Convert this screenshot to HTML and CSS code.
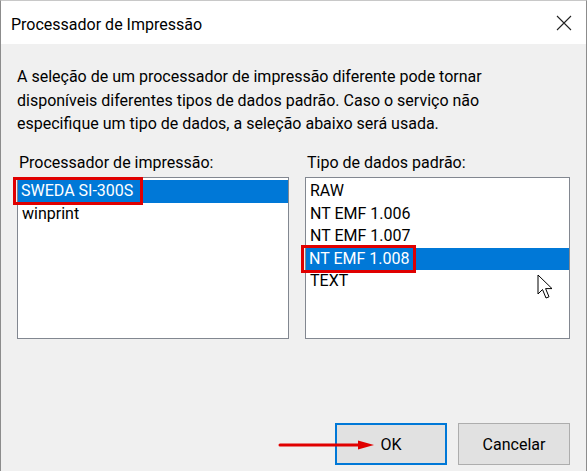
FILE: index.html
```html
<!DOCTYPE html>
<html lang="pt">
<head>
<meta charset="utf-8">
<link rel="stylesheet" href="styles.css">
</head>
<body>
<div class="window">
  <div class="titlebar">
    <span class="title">Processador de Impressão</span>
    <svg class="close" width="16" height="16" viewBox="0 0 16 16"><path d="M1 1L15 15M15 1L1 15" stroke="#222" stroke-width="1.1" fill="none"/></svg>
  </div>
  <div class="content">
    <p class="desc">A seleção de um processador de impressão diferente pode tornar<br>disponíveis diferentes tipos de dados padrão. Caso o serviço não<br>especifique um tipo de dados, a seleção abaixo será usada.</p>
    <div class="columns">
      <div class="col col-left">
        <div class="label">Processador de impressão:</div>
        <div class="list">
          <div class="item selected"><span class="mark mark-left">SWEDA SI-300S</span></div>
          <div class="item">winprint</div>
        </div>
      </div>
      <div class="col col-right">
        <div class="label">Tipo de dados padrão:</div>
        <div class="list">
          <div class="item">RAW</div>
          <div class="item">NT EMF 1.006</div>
          <div class="item">NT EMF 1.007</div>
          <div class="item selected"><span class="mark mark-right">NT EMF 1.008</span></div>
          <div class="item">TEXT</div>
          <svg class="cursor" width="18" height="27" viewBox="0 0 18 27"><path d="M1 1 L1 20 L5.5 15.5 L9 24 L12 22.8 L8.6 14.6 L15 14.6 Z" fill="#fff" stroke="#000" stroke-width="1" stroke-linejoin="miter"/></svg>
        </div>
      </div>
    </div>
    <div class="buttons">
      <svg class="arrow" width="100" height="12" viewBox="0 0 100 12"><path d="M2 6 H84" stroke="#e00000" stroke-width="3" stroke-linecap="round"/><path d="M80 1.5 L96 6 L80 10.5 Z" fill="#e00000"/></svg>
      <button class="btn btn-default">OK</button>
      <button class="btn">Cancelar</button>
    </div>
  </div>
</div>
</body>
</html>
```

FILE: styles.css
```css
html, body {
  margin: 0;
  padding: 0;
  background: #f0f0f0;
}
body {
  font-family: Roboto, "Noto Sans", sans-serif;
  font-size: 16px;
  color: #000;
}
.window {
  width: 587px;
  height: 471px;
  box-sizing: border-box;
  border-left: 1px solid #8c8c8c;
  border-right: 1px solid #8c8c8c;
  border-top: 1px solid #c8c8c8;
  background: #f0f0f0;
  display: flex;
  flex-direction: column;
}
.titlebar {
  height: 43px;
  background: #fff;
  display: flex;
  align-items: center;
  justify-content: space-between;
  padding: 0 14px 0 10px;
  box-sizing: border-box;
}
.title {
  font-size: 16px;
  position: relative;
  top: 2px;
}
.close {
  position: relative;
  top: 0px;
}
.content {
  flex: 1;
  padding: 21px 16px 0 16px;
  display: flex;
  flex-direction: column;
}
.desc {
  margin: 0;
  line-height: 23.5px;
  white-space: nowrap;
}
.columns {
  display: flex;
  gap: 16px;
  margin-top: 15px;
}
.col {
  display: flex;
  flex-direction: column;
}
.col-left { width: 273px; }
.col-right { width: 266px; }
.label {
  line-height: 23.5px;
  padding-left: 2px;
  margin-bottom: 3px;
}
.list {
  position: relative;
  height: 162px;
  box-sizing: border-box;
  border: 1px solid #828790;
  background: #fff;
  padding-top: 2px;
}
.item {
  height: 22.6px;
  line-height: 22.6px;
  padding-left: 4px;
  white-space: nowrap;
}
.item.selected {
  background: #0078d7;
  color: #fff;
}
.mark {
  display: inline-block;
  box-shadow: 0 0 0 3px #e00000;
  line-height: 22px;
}
.mark-left {
  margin-left: -6px;
  padding: 0 7px 0 5px;
}
.mark-right {
  margin-left: -6px;
  padding: 0 4px 0 5px;
}
.cursor {
  position: absolute;
  left: 231px;
  top: 96px;
}
.buttons {
  margin-top: auto;
  margin-bottom: 6px;
  display: flex;
  justify-content: flex-end;
  align-items: center;
  gap: 11px;
  position: relative;
}
.btn {
  width: 112px;
  height: 42px;
  box-sizing: border-box;
  background: #e1e1e1;
  border: 1px solid #adadad;
  font-family: inherit;
  font-size: 16px;
  color: #000;
  padding: 0;
}
.btn-default {
  border: 2px solid #0078d7;
}
.arrow {
  position: absolute;
  left: 261px;
  top: 16px;
}
```
